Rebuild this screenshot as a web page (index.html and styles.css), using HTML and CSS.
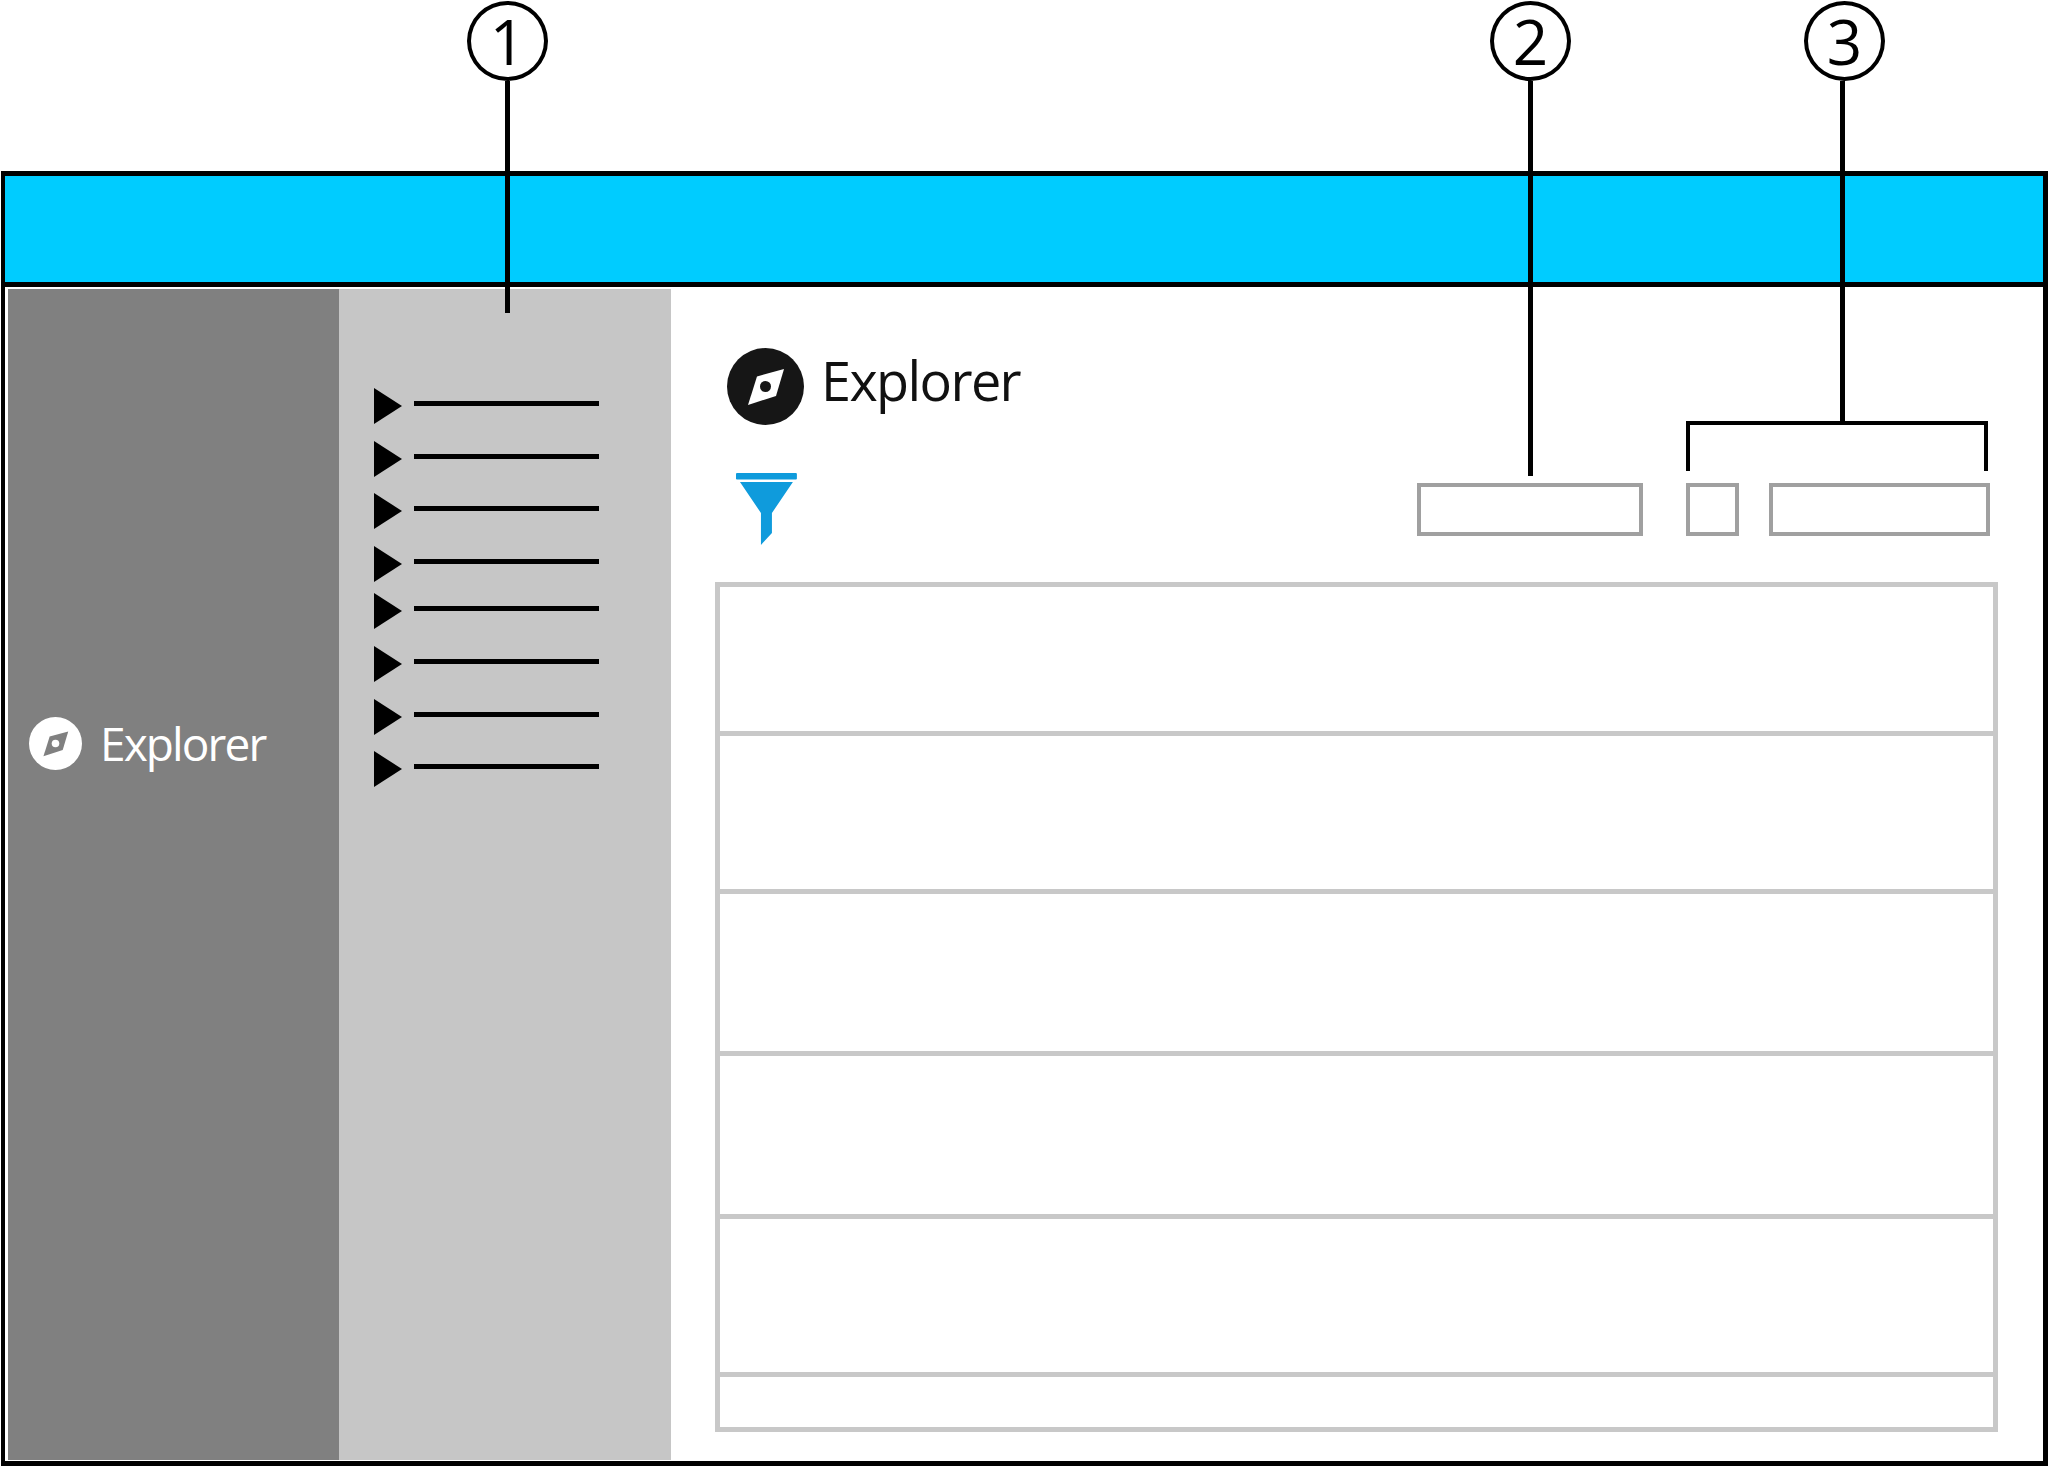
FILE: index.html
```html
<!DOCTYPE html>
<html lang="en">
<head>
    <meta charset="UTF-8">
    <meta name="viewport" content="width=device-width, initial-scale=1.0">
    <title>Explorer</title>
    <link rel="stylesheet" href="styles.css">
</head>
<body>
    <div class="frame">
        <div class="topbar"></div>
        <div class="content">
            <div class="sidebar">
                <svg class="brand-icon-small" viewBox="0 0 77 77">
                    <circle cx="38.5" cy="38.5" r="38.5" fill="#fff"/>
                    <path d="M57 21 L30 28.500 L21 57 L49 48 Z" fill="#808080"/>
                    <circle cx="38.500" cy="38.500" r="5.500" fill="#fff"/>
                </svg>
                <span class="sidebar-label">Explorer</span>
            </div>
            <div class="nav">
                <div class="nav-item"><span class="arrow"></span><span class="nav-line"></span></div>
                <div class="nav-item"><span class="arrow"></span><span class="nav-line"></span></div>
                <div class="nav-item"><span class="arrow"></span><span class="nav-line"></span></div>
                <div class="nav-item"><span class="arrow"></span><span class="nav-line"></span></div>
                <div class="nav-item tight"><span class="arrow"></span><span class="nav-line"></span></div>
                <div class="nav-item"><span class="arrow"></span><span class="nav-line"></span></div>
                <div class="nav-item"><span class="arrow"></span><span class="nav-line"></span></div>
                <div class="nav-item"><span class="arrow"></span><span class="nav-line"></span></div>
            </div>
            <div class="main">
                <div class="title-row">
                    <svg class="brand-icon" viewBox="0 0 77 77">
                        <circle cx="38.5" cy="38.5" r="38.5" fill="#161616"/>
                        <path d="M57 21 L30 28.500 L21 57 L49 48 Z" fill="#fff"/>
                        <circle cx="38.500" cy="38.500" r="5.500" fill="#161616"/>
                    </svg>
                    <h1 class="title">Explorer</h1>
                </div>
                <div class="toolbar">
                    <svg class="filter-icon" viewBox="0 0 61 72">
                        <rect x="0" y="0" width="61" height="6.500" rx="1" fill="#0f9bdc"/>
                        <path d="M4 9 L57 9 L36 40 L36 60 L25 72 L25 40 Z" fill="#0f9bdc"/>
                    </svg>
                    <div class="box box-search"></div>
                    <div class="box box-small"></div>
                    <div class="box box-wide"></div>
                </div>
                <div class="table">
                    <div class="row row-1"></div>
                    <div class="row row-2"></div>
                    <div class="row row-3"></div>
                    <div class="row row-4"></div>
                    <div class="row row-5"></div>
                    <div class="row row-6"></div>
                </div>
            </div>
        </div>
    </div>

    <!-- numbered callouts drawn over the wireframe -->
    <div class="callout callout-1"><div class="bubble">1</div><div class="stem"></div></div>
    <div class="callout callout-2"><div class="bubble">2</div><div class="stem"></div></div>
    <div class="callout callout-3"><div class="bubble">3</div><div class="stem"></div></div>
    <div class="bracket"></div>
</body>
</html>
```

FILE: styles.css
```css
* {
    box-sizing: border-box;
}
body {
    margin: 0;
    width: 2048px;
    height: 1467px;
    position: relative;
    overflow: hidden;
    background: #fff;
    font-family: "Open Sans", Arial, sans-serif;
}
.frame {
    position: absolute;
    left: 1px;
    top: 171px;
    width: 2047px;
    height: 1295px;
    border: 5px solid #000;
    border-left-width: 4px;
    display: flex;
    flex-direction: column;
}
.topbar {
    height: 111px;
    flex: none;
    background: #00ccff;
    border-bottom: 5px solid #000;
}
.content {
    flex: 1;
    display: flex;
    padding: 2px 0 1px 3px;
    min-height: 0;
}
.sidebar {
    width: 331px;
    background: #808080;
    display: flex;
    align-items: flex-start;
    padding: 428px 0 0 21px;
}
.brand-icon-small {
    width: 53px;
    height: 53px;
    flex: none;
}
.sidebar-label {
    margin-left: 18px;
    color: #fff;
    font-size: 46px;
    font-weight: 400;
    letter-spacing: -1.9px;
    line-height: 53px;
}
.nav {
    width: 332px;
    background: #c6c6c6;
    padding: 98.5px 0 0 35px;
}
.nav-item {
    display: flex;
    align-items: center;
    height: 37px;
    margin-bottom: 15.6px;
}
.nav-item.tight {
    margin-top: -5px;
}
.arrow {
    width: 0;
    height: 0;
    border-left: 28px solid #000;
    border-top: 18.5px solid transparent;
    border-bottom: 18.5px solid transparent;
}
.nav-line {
    width: 185px;
    height: 5px;
    margin: -5px 0 0 12px;
    background: #000;
}
.main {
    flex: 1;
    padding: 59px 0 0 44px;
}
.title-row {
    display: flex;
    align-items: center;
    margin-left: 12px;
    height: 77px;
}
.brand-icon {
    width: 77px;
    height: 77px;
    flex: none;
}
.title {
    margin: -13px 0 0 17px;
    font-size: 54px;
    font-weight: 400;
    letter-spacing: -1.6px;
    color: #111;
}
.toolbar {
    display: flex;
    align-items: flex-start;
    height: 109px;
    margin-top: 48px;
    padding-right: 8px;
    width: 1283px;
}
.filter-icon {
    width: 61px;
    height: 72px;
    margin-left: 21px;
}
.box {
    height: 53px;
    margin-top: 10px;
    border: 4px solid #a0a0a0;
}
.box-search {
    width: 227px;
    margin-left: 620px;
}
.box-small {
    width: 53px;
    margin-left: 43px;
}
.box-wide {
    width: 221px;
    margin-left: 30px;
}
.table {
    width: 1283px;
    height: 850px;
    border: 5px solid #c8c8c8;
}
.row {
    border-bottom: 5px solid #c8c8c8;
}
.row-1 { height: 149px; }
.row-2 { height: 158px; }
.row-3 { height: 162px; }
.row-4 { height: 163px; }
.row-5 { height: 158px; }
.row-6 { height: 50px; border-bottom: 0; }
.callout {
    position: absolute;
    top: 1px;
    width: 81px;
    display: flex;
    flex-direction: column;
    align-items: center;
}
.callout-1 { left: 467px; }
.callout-2 { left: 1490px; }
.callout-3 { left: 1804px; }
.bubble {
    width: 81px;
    height: 80px;
    border: 4px solid #000;
    border-radius: 50%;
    background: #fff;
    color: #000;
    font-size: 62px;
    line-height: 72px;
    text-align: center;
}
.stem {
    width: 5px;
    background: #000;
}
.callout-1 .stem { height: 232px; }
.callout-2 .stem { height: 395px; }
.callout-3 .stem { height: 340px; margin-left: -5px; }
.bracket {
    position: absolute;
    left: 1686px;
    top: 421px;
    width: 302px;
    height: 50px;
    border: 4.5px solid #000;
    border-bottom: 0;
}
```
